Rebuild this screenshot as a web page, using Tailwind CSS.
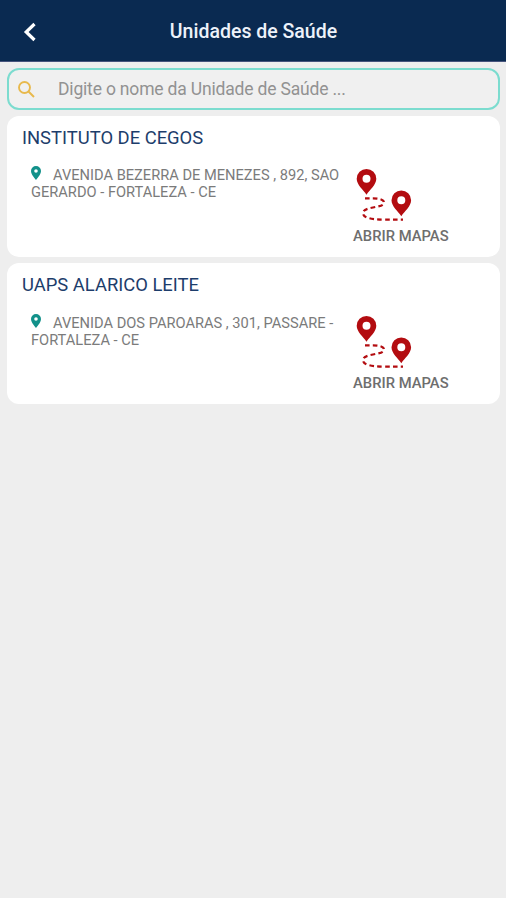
<!DOCTYPE html>
<html lang="pt-BR">
<head>
<meta charset="utf-8">
<title>Unidades de Saúde</title>
<script src="https://cdn.jsdelivr.net/npm/@tailwindcss/browser@4"></script>
</head>
<body class="bg-white font-[Roboto,sans-serif]">
<svg class="hidden">
  <symbol id="pin" viewBox="0 0 10 14"><path fill="#12918a" fill-rule="evenodd" d="M5 0a5 5 0 0 0-5 5c0 3.600 5 9 5 9s5-5.400 5-9a5 5 0 0 0-5-5zm0 3.200a1.800 1.800 0 1 1 0 3.600 1.800 1.800 0 0 1 0-3.600z"/></symbol>
  <symbol id="route" viewBox="0 0 56 54">
    <g fill="#b30c10" fill-rule="evenodd">
      <path d="M10.500 1a9.800 9.800 0 0 0-9.800 9.800c0 6 6.500 11 9.800 16 3.300-5 9.800-10 9.800-16A9.800 9.800 0 0 0 10.500 1zm0 5.800a4 4 0 1 1 0 8 4 4 0 0 1 0-8z"/>
      <path d="M45.300 22.500a9.800 9.800 0 0 0-9.800 9.800c0 6 6.500 11 9.800 16 3.300-5 9.800-10 9.800-16a9.800 9.800 0 0 0-9.800-9.800zm0 5.800a4 4 0 1 1 0 8 4 4 0 0 1 0-8z"/>
    </g>
    <path fill="none" stroke="#b30c10" stroke-width="2.200" stroke-dasharray="4.600 3.200" d="M9 30.300h8c6 0 11 1.300 11 4.200 0 3.200-5 3.700-11 5-6 1.200-10 2.600-10 5.500 0 4.500 7 6.600 22 6.600h18"/>
  </symbol>
</svg>
<main class="flex h-[898px] w-[506px] flex-col bg-[#eeeeee]">
  <header class="grid h-[62px] grid-cols-[60px_1fr_60px] items-center border-b border-[#46547d] bg-[#0a2a51]">
    <svg class="ml-[23px] mt-[2px] h-5 w-[14px]" viewBox="0 0 14 20" fill="none" stroke="#fff" stroke-width="3.200"><path d="M11.500 2 3.200 10l8.300 8"/></svg>
    <h1 class="pl-px pt-[2px] text-center text-[19.500px] font-medium leading-6 text-[#edf2fa]">Unidades de Saúde</h1>
  </header>
  <div class="flex flex-col gap-[6px] pl-[7px] pr-[6px] pt-[6px]">
    <div class="flex h-[42px] items-center rounded-[12px] border-2 border-[#7cdccf] bg-[#f0f0f0] pl-[9px]">
      <svg class="h-[17px] w-[17px]" viewBox="0 0 17 17" fill="none" stroke="#e8b94c" stroke-width="1.900"><circle cx="6.500" cy="6.500" r="5.500"/><path d="m10.500 10.500 5.500 5.500"/></svg>
      <span class="ml-[23px] text-[17.500px] leading-6 tracking-[-0.180px] text-[#929292]">Digite o nome da Unidade de Saúde ...</span>
    </div>
    <article class="h-[141px] rounded-[12px] bg-white pl-[15px] pt-[10px]">
      <h2 class="text-[18.400px] leading-6 text-[#1d3d6b]">INSTITUTO DE CEGOS</h2>
      <div class="flex">
        <p class="mt-[16px] w-[331px] pl-[9px] text-[14.650px] leading-[17px] text-[#7b7b7b]"><svg class="mr-[12px] inline-block h-[14px] w-[10px] align-[0px]"><use href="#pin"/></svg>AVENIDA BEZERRA DE MENEZES , 892, SAO<br>GERARDO - FORTALEZA - CE</p>
        <div class="mt-[18px]">
          <svg class="ml-[3px] h-[54px] w-[56px]"><use href="#route"/></svg>
          <div class="mt-[5px] whitespace-nowrap text-[14.800px] font-medium leading-[18px] text-[#6e6e6e]">ABRIR MAPAS</div>
        </div>
      </div>
    </article>
    <article class="h-[141px] rounded-[12px] bg-white pl-[15px] pt-[10px]">
      <h2 class="text-[18.400px] leading-6 text-[#1d3d6b]">UAPS ALARICO LEITE</h2>
      <div class="flex">
        <p class="mt-[17px] w-[331px] pl-[9px] text-[14.650px] leading-[17px] text-[#7b7b7b]"><svg class="mr-[12px] inline-block h-[14px] w-[10px] align-[0px]"><use href="#pin"/></svg>AVENIDA DOS PAROARAS , 301, PASSARE -<br>FORTALEZA - CE</p>
        <div class="mt-[18.400px]">
          <svg class="ml-[3px] h-[54px] w-[56px]"><use href="#route"/></svg>
          <div class="mt-[5px] whitespace-nowrap text-[14.800px] font-medium leading-[18px] text-[#6e6e6e]">ABRIR MAPAS</div>
        </div>
      </div>
    </article>
  </div>
</main>
</body>
</html>
